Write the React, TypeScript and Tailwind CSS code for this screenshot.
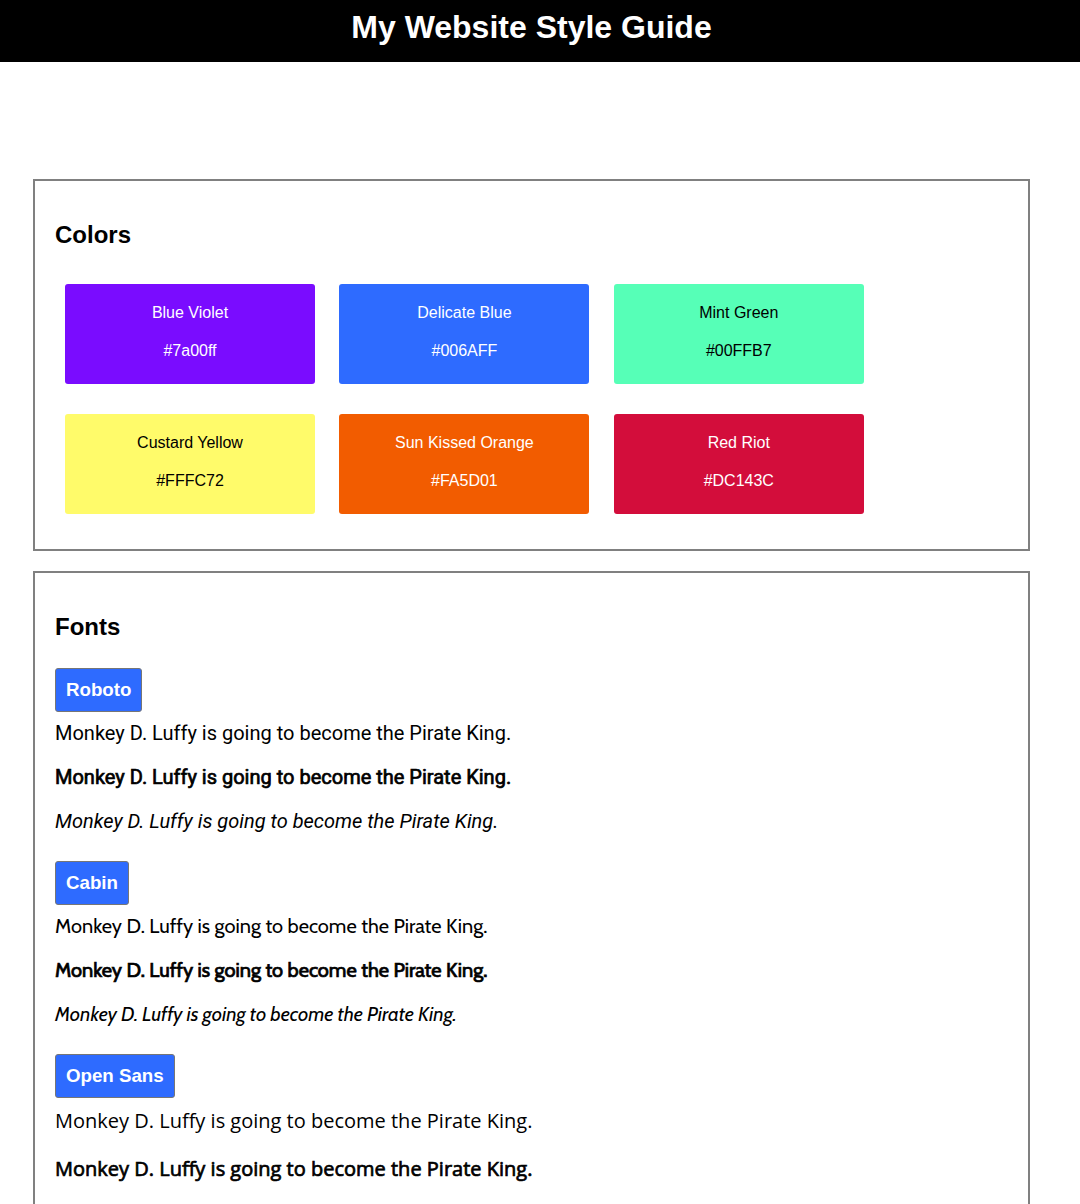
import React from 'react';

const swatches = [
    { name: 'Blue Violet', hex: '#7a00ff', className: 'bg-[#7a0cff] text-white' },
    { name: 'Delicate Blue', hex: '#006AFF', className: 'bg-[#2e6bff] text-white' },
    { name: 'Mint Green', hex: '#00FFB7', className: 'bg-[#56ffb7] text-black' },
    { name: 'Custard Yellow', hex: '#FFFC72', className: 'bg-[#fffb6a] text-black' },
    { name: 'Sun Kissed Orange', hex: '#FA5D01', className: 'bg-[#f25c00] text-white' },
    { name: 'Red Riot', hex: '#DC143C', className: 'bg-[#d30d3b] text-white' },
];

const fonts = [
    {
        label: 'Roboto',
        family: "font-['Roboto',sans-serif]",
        block: 'mt-[27.4px]',
        lines: 'mt-[8.7px] gap-[20px] leading-[24px]',
    },
    {
        label: 'Cabin',
        family: "font-['Cabin','Lato',sans-serif]",
        block: 'mt-[28.8px]',
        lines: 'mt-[9.1px] gap-[20px] leading-[24px]',
    },
    {
        label: 'Open Sans',
        family: "font-['Open_Sans',sans-serif]",
        block: 'mt-[28.4px]',
        lines: 'mt-[9.5px] gap-[21px] leading-[27px]',
    },
];

const sentence = 'Monkey D. Luffy is going to become the Pirate King.';

const Swatch: React.FC<{ swatch: typeof swatches[0] }> = ({ swatch }) => (
    <div className={`w-[250px] h-[100px] rounded-[3px] flex flex-col items-center pt-[20px] gap-[19.6px] text-[16px] leading-[18.4px] ${swatch.className}`}>
        <p>{swatch.name}</p>
        <p>{swatch.hex}</p>
    </div>
);

const Section: React.FC<{ title: string; className?: string; children: React.ReactNode }> = ({ title, className, children }) => (
    <section className={`border-2 border-[#808080] p-[20px] ${className ?? ''}`}>
        <h2 className="mt-[20px] text-[24px] font-bold leading-[normal]">{title}</h2>
        {children}
    </section>
);

const FontBlock: React.FC<{ font: typeof fonts[0] }> = ({ font }) => (
    <div className={font.block}>
        <div className="w-fit bg-[#2e6bff] border border-[#767676] rounded-[3px] px-[10px] py-[10px] text-white font-bold text-[18.72px] leading-[21.5px]">
            {font.label}
        </div>
        <div className={`flex flex-col text-[20px] text-black ${font.lines} ${font.family}`}>
            <p>{sentence}</p>
            <p className="font-normal [-webkit-text-stroke:0.7px_black]">{sentence}</p>
            <p className="italic">{sentence}</p>
        </div>
    </div>
);

export default function App() {
    return (
        <div className="min-h-[1204px] bg-white font-['Liberation_Sans',Arial,sans-serif] text-black">
            <header className="h-[62px] bg-black">
                <div className="w-[1063px] pt-[9px] text-center">
                    <h1 className="text-[32px] font-bold leading-[normal] text-white">My Website Style Guide</h1>
                </div>
            </header>

            <main className="w-[1063px] px-[33px] pt-[117px] pb-[40px]">
                <Section title="Colors">
                    <div className="mt-[35px] mb-[15px] ml-[10px] flex flex-wrap gap-x-[24.4px] gap-y-[30px] w-[800px]">
                        {swatches.map(s => (
                            <Swatch key={s.name} swatch={s} />
                        ))}
                    </div>
                </Section>

                <Section title="Fonts" className="mt-[20px]">
                    {fonts.map(f => (
                        <FontBlock key={f.label} font={f} />
                    ))}
                </Section>
            </main>
        </div>
    );
}
